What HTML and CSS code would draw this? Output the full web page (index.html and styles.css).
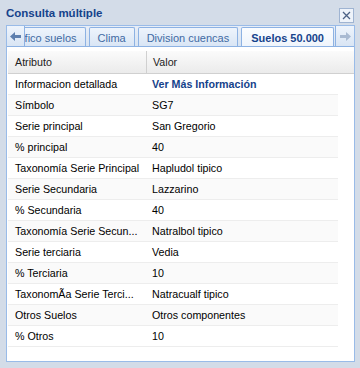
FILE: index.html
```html
<!DOCTYPE html>
<html lang="es">
<head>
  <meta charset="UTF-8" />
  <meta name="viewport" content="width=device-width, initial-scale=1.0"/>
  <title>Consulta múltiple</title>
  <link rel="stylesheet" href="styles.css">
</head>
<body>
  <div class="win">
    <header class="win-head">
      <span class="win-title">Consulta múltiple</span>
      <span class="tool-close">
        <svg width="9" height="9" viewBox="0 0 9 9"><path d="M1 1 L8 8 M8 1 L1 8" stroke="#4b6185" stroke-width="1.3" fill="none"/></svg>
      </span>
    </header>

    <nav class="tabbar">
      <div class="scroller scroller-left">
        <svg width="11" height="9" viewBox="0 0 11 9"><path d="M0 4.5 L5 0 L5 3 L11 3 L11 6 L5 6 L5 9 Z" fill="#5e7fae"/></svg>
      </div>
      <div class="tabs-wrap">
        <ul class="tabs">
          <li class="tab">Gráfico suelos</li>
          <li class="tab">Clima</li>
          <li class="tab">Division cuencas</li>
          <li class="tab active">Suelos 50.000</li>
        </ul>
      </div>
      <div class="scroller scroller-right">
        <svg width="11" height="9" viewBox="0 0 11 9"><path d="M11 4.5 L6 0 L6 3 L0 3 L0 6 L6 6 L6 9 Z" fill="#a9bad2"/></svg>
      </div>
    </nav>

    <main class="panel-body">
      <div class="grid">
        <div class="grid-head">
          <div class="cell col-a">Atributo</div>
          <div class="cell col-b">Valor</div>
        </div>
        <div class="grid-rows">
          <div class="row"><div class="cell col-a">Informacion detallada</div><div class="cell col-b link">Ver Más Información</div></div>
          <div class="row"><div class="cell col-a">Símbolo</div><div class="cell col-b">SG7</div></div>
          <div class="row"><div class="cell col-a">Serie principal</div><div class="cell col-b">San Gregorio</div></div>
          <div class="row"><div class="cell col-a">% principal</div><div class="cell col-b">40</div></div>
          <div class="row"><div class="cell col-a">Taxonomía Serie Principal</div><div class="cell col-b">Hapludol tipico</div></div>
          <div class="row"><div class="cell col-a">Serie Secundaria</div><div class="cell col-b">Lazzarino</div></div>
          <div class="row"><div class="cell col-a">% Secundaria</div><div class="cell col-b">40</div></div>
          <div class="row"><div class="cell col-a">Taxonomía Serie Secun...</div><div class="cell col-b">Natralbol tipico</div></div>
          <div class="row"><div class="cell col-a">Serie terciaria</div><div class="cell col-b">Vedia</div></div>
          <div class="row"><div class="cell col-a">% Terciaria</div><div class="cell col-b">10</div></div>
          <div class="row"><div class="cell col-a">TaxonomÃa Serie Terci...</div><div class="cell col-b">Natracualf tipico</div></div>
          <div class="row"><div class="cell col-a">Otros Suelos</div><div class="cell col-b">Otros componentes</div></div>
          <div class="row"><div class="cell col-a">% Otros</div><div class="cell col-b">10</div></div>
        </div>
      </div>
    </main>
  </div>
</body>
</html>
```

FILE: styles.css
```css
body {
  margin: 0;
  font-family: 'Liberation Sans', Arial, sans-serif;
  font-size: 10.7px;
  background: #d3dce8;
  color: #000;
}

.win {
  width: 360px;
  height: 368px;
  padding: 0 5px 0 6px;
  box-sizing: border-box;
  display: flex;
  flex-direction: column;
}

.win-head {
  height: 25px;
  display: flex;
  align-items: center;
  justify-content: space-between;
}

.win-title {
  font-weight: bold;
  font-size: 11.5px;
  color: #15428b;
  margin-top: 1px;
}

.tool-close {
  width: 13px;
  height: 13px;
  border: 1px solid #9fb4d2;
  background: #eef3fa;
  display: flex;
  align-items: center;
  justify-content: center;
  margin-top: 5px;
  margin-right: 1px;
}

.tabbar {
  height: 22px;
  display: flex;
  border: 1px solid #99bbe8;
  border-bottom: none;
  background: linear-gradient(#e8eef7, #d7e3f2);
  box-sizing: border-box;
}

.scroller {
  width: 17px;
  display: flex;
  align-items: center;
  justify-content: center;
  background: linear-gradient(#eef4fc, #d9e5f4);
  border-bottom: 1px solid #8db2e3;
}

.scroller-left {
  border-right: 1px solid #8db2e3;
}

.scroller-right {
  border-left: 1px solid #8db2e3;
  width: 18px;
}

.tabs-wrap {
  flex: 1;
  overflow: hidden;
  display: flex;
  justify-content: flex-end;
  border-bottom: 1px solid #8db2e3;
  padding-top: 1px;
}

.tabs {
  list-style: none;
  margin: 0 1px 0 0;
  padding: 0;
  display: flex;
  gap: 3px;
  flex-shrink: 0;
}

.tab {
  flex-shrink: 0;
  padding: 0 8px;
  height: 20px;
  line-height: 20px;
  border: 1px solid #8db2e3;
  border-bottom: none;
  border-radius: 2px 2px 0 0;
  background: linear-gradient(#eef4fc, #d7e4f4);
  color: #416aa3;
  font-size: 11px;
}

.tab.active {
  font-weight: bold;
  color: #15428b;
  background: linear-gradient(#fbfdff, #edf3fb);
  height: 21px;
  margin-bottom: -1px;
  padding: 0 9px;
}

.panel-body {
  flex: 1;
  margin-bottom: 6px;
  background: #fff;
  border: 1px solid #99bbe8;
  border-top: none;
  padding-top: 4px;
}

.grid-head {
  display: flex;
  height: 22px;
  background: linear-gradient(#fbfbfb, #ebebeb);
  border-bottom: 1px solid #d0d0d0;
  margin-left: 1px;
}

.grid-head .cell {
  line-height: 22px;
  color: #222;
}

.grid-head .col-a {
  border-right: 1px solid #d0d0d0;
}

.grid-rows {
  width: 330px;
  margin-left: 1px;
}

.row {
  display: flex;
  height: 20px;
  border-bottom: 1px solid #ededed;
}

.row:nth-child(even) {
  background: #fafafa;
}

.cell {
  line-height: 20px;
  white-space: nowrap;
  overflow: hidden;
}

.col-a {
  width: 131px;
  padding-left: 7px;
}

.col-b {
  padding-left: 6px;
  flex: 1;
}

.link {
  font-weight: bold;
  color: #15428b;
}
```
